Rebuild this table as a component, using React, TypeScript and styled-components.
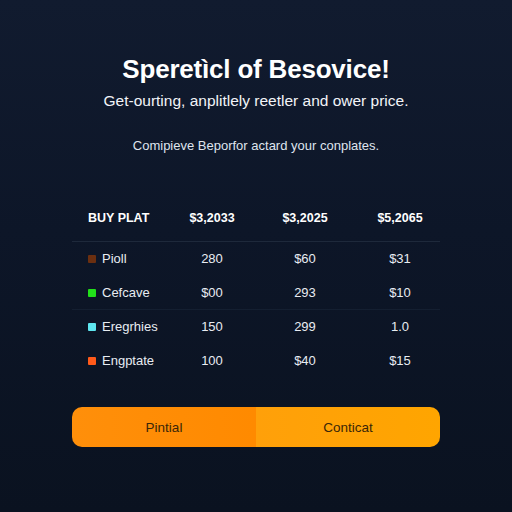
import React from 'react'
import styled, { createGlobalStyle } from 'styled-components'

const GlobalStyle = createGlobalStyle`
	html, body {
		margin: 0;
		padding: 0;
		background: #0c1424;
	}
	body {
		font-family: 'Liberation Sans', Arial, sans-serif;
	}
`

const Page = styled.div`
	width: 512px;
	height: 512px;
	box-sizing: border-box;
	background: linear-gradient(180deg, #111b2f 0%, #0d1628 45%, #0a1220 100%);
	color: #fff;
	padding: 52px 72px 0 72px;
	display: flex;
	flex-direction: column;
`

const Title = styled.h1`
	margin: 0;
	text-align: center;
	font-size: 26px;
	font-weight: 700;
	line-height: 34px;
	letter-spacing: -0.2px;
`

const Subtitle = styled.p`
	margin: 4px -30px 0;
	text-align: center;
	font-size: 15.5px;
	line-height: 22px;
	color: #f2f4f8;
	white-space: nowrap;
`

const Note = styled.p`
	margin: 26px 0 0;
	text-align: center;
	font-size: 13px;
	line-height: 16px;
	color: #dfe4ee;
`

const Table = styled.div`
	margin-top: 41px;
	display: flex;
	flex-direction: column;
`

const Row = styled.div<{ $head?: boolean; $line?: boolean }>`
	display: grid;
	grid-template-columns: 84px 80px 106px 84px;
	align-items: center;
	box-sizing: border-box;
	height: ${p => (p.$head ? '47px' : '34px')};
	padding-left: 16px;
	border-bottom: 1px solid ${p => (p.$line ? (p.$head ? '#1e293b' : '#141f31') : 'transparent')};
	font-size: ${p => (p.$head ? '12.5px' : '13px')};
	font-weight: ${p => (p.$head ? 700 : 400)};
	color: ${p => (p.$head ? '#ffffff' : '#e8ecf2')};
`

const Label = styled.div`
	display: flex;
	align-items: center;
	gap: 6px;
	white-space: nowrap;
`

const Swatch = styled.span<{ $color: string }>`
	width: 8px;
	height: 8px;
	background: ${p => p.$color};
	border-radius: 1px;
	flex-shrink: 0;
`

const Cell = styled.div`
	text-align: center;
`

const Buttons = styled.div`
	margin-top: 29px;
	display: flex;
	height: 40px;
	border-radius: 10px;
	overflow: hidden;
`

const Button = styled.button<{ $bg: string }>`
	flex: 1;
	border: none;
	background: ${p => p.$bg};
	color: #3a2608;
	font-family: 'Liberation Sans', Arial, sans-serif;
	font-size: 13.5px;
	cursor: pointer;
`

const rows = [
	{ name: 'Pioll', color: '#6b2f10', a: '280', b: '$60', c: '$31' },
	{ name: 'Cefcave', color: '#22e01a', a: '$00', b: '293', c: '$10' },
	{ name: 'Eregrhies', color: '#5ee6f0', a: '150', b: '299', c: '1.0' },
	{ name: 'Engptate', color: '#ff5a1a', a: '100', b: '$40', c: '$15' }
]

const App = () => (
	<Page>
		<GlobalStyle />
		<Title>Speretìcl of Besovice!</Title>
		<Subtitle>Get-ourting, anplitlely reetler and ower price.</Subtitle>
		<Note>Comipieve Beporfor actard your conplates.</Note>
		<Table>
			<Row $head $line>
				<Label>BUY PLAT</Label>
				<Cell>$3,2033</Cell>
				<Cell>$3,2025</Cell>
				<Cell>$5,2065</Cell>
			</Row>
			{rows.map((r, i) => (
				<Row key={r.name} $line={i === 1}>
					<Label>
						<Swatch $color={r.color} />
						{r.name}
					</Label>
					<Cell>{r.a}</Cell>
					<Cell>{r.b}</Cell>
					<Cell>{r.c}</Cell>
				</Row>
			))}
		</Table>
		<Buttons>
			<Button $bg="linear-gradient(90deg, #ff8f0a, #ff8a00)">Pintial</Button>
			<Button $bg="linear-gradient(90deg, #ffa00a, #ffa500)">Conticat</Button>
		</Buttons>
	</Page>
)

export default App
